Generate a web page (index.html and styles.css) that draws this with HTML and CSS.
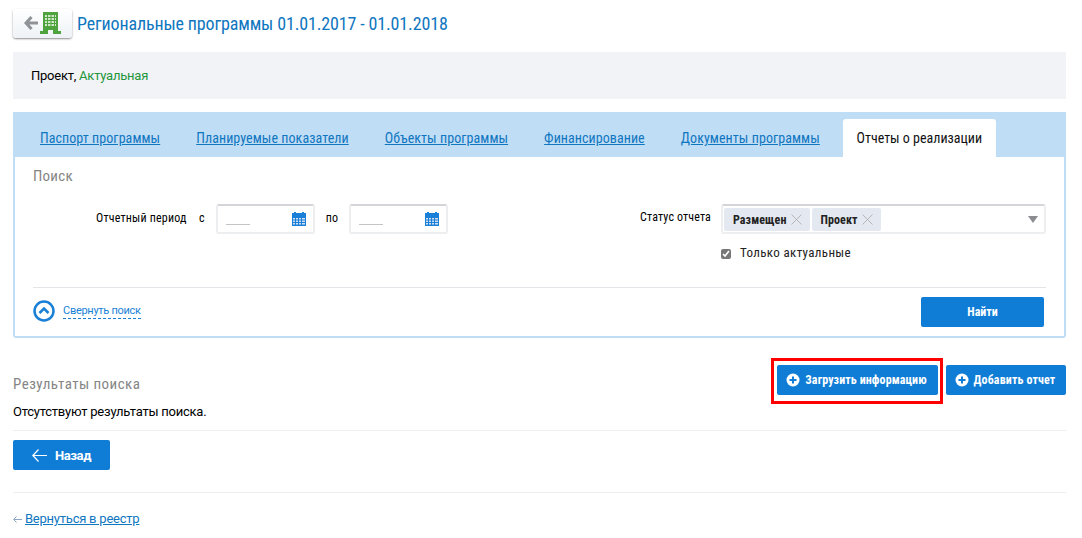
FILE: index.html
```html
<!DOCTYPE html>
<html lang="ru">
<head>
<meta charset="utf-8">
<title>Региональные программы</title>
<link rel="stylesheet" href="styles.css">
</head>
<body>
<header class="head">
  <a class="home" href="#">
    <svg class="home-arrow" width="14" height="14" viewBox="0 0 14 14"><path d="M7.500 1 2 7l5.500 6M3 7h11" fill="none" stroke="#8f9296" stroke-width="3"/></svg>
    <svg class="home-build" width="21" height="22" viewBox="0 0 21 22"><path fill="#4fa33f" d="M0 19h3V0h15v19h3v3H13v-4H8v4H0z"/><path fill="#cfe6c8" d="M5 3h2v2H5zM8 3h2.500v2H8zM11.500 3H14v2h-2.500zM15 3h1v2h-1zM5 6h2v2H5zM8 6h2.500v2H8zM11.500 6H14v2h-2.500zM15 6h1v2h-1zM5 9h2v2H5zM8 9h2.500v2H8zM11.500 9H14v2h-2.500zM15 9h1v2h-1zM5 12h2v2H5zM8 12h2.500v2H8zM11.500 12H14v2h-2.500zM15 12h1v2h-1z"/></svg>
  </a>
  <h1 class="title">Региональные программы 01.01.2017 - 01.01.2018</h1>
</header>

<div class="status">Проект, <span class="status-ok">Актуальная</span></div>

<section class="panel">
  <nav class="tabs">
    <a class="tab" href="#">Паспорт программы</a>
    <a class="tab" href="#">Планируемые показатели</a>
    <a class="tab" href="#">Объекты программы</a>
    <a class="tab" href="#">Финансирование</a>
    <a class="tab" href="#">Документы программы</a>
    <span class="tab tab-active">Отчеты о реализации</span>
  </nav>
  <div class="panel-body">
    <h2 class="search-title">Поиск</h2>
    <div class="form">
      <div class="period">
        <span class="period-label">Отчетный период</span>
        <span class="period-from">с</span>
        <div class="date">
          <span class="date-mask"></span>
          <svg width="14" height="14" viewBox="0 0 14 14"><path fill="#1a7fd6" d="M2 0h2v1h6V0h2v1h2v4H0V1h2z"/><path fill="#1a7fd6" d="M0 5h14v9H0z"/><path fill="#cfe0f5" d="M1 6h2v1.500H1zM4 6h2v1.500H4zM7 6h2v1.500H7zM10 6h3v1.500h-3zM1 8.500h2V10H1zM4 8.500h2V10H4zM7 8.500h2V10H7zM10 8.500h3V10h-3zM1 11h2v1.500H1zM4 11h2v1.500H4zM7 11h2v1.500H7zM10 11h3v1.500h-3z"/></svg>
        </div>
        <span class="period-to">по</span>
        <div class="date">
          <span class="date-mask"></span>
          <svg width="14" height="14" viewBox="0 0 14 14"><path fill="#1a7fd6" d="M2 0h2v1h6V0h2v1h2v4H0V1h2z"/><path fill="#1a7fd6" d="M0 5h14v9H0z"/><path fill="#cfe0f5" d="M1 6h2v1.500H1zM4 6h2v1.500H4zM7 6h2v1.500H7zM10 6h3v1.500h-3zM1 8.500h2V10H1zM4 8.500h2V10H4zM7 8.500h2V10H7zM10 8.500h3V10h-3zM1 11h2v1.500H1zM4 11h2v1.500H4zM7 11h2v1.500H7zM10 11h3v1.500h-3z"/></svg>
        </div>
      </div>
      <div class="state">
        <div class="state-row">
          <span class="state-label">Статус отчета</span>
          <div class="select">
            <span class="chip">Размещен<svg width="11" height="11" viewBox="0 0 11 11"><path d="M.5.5l10 10M10.500.5l-10 10" stroke="#b4b8bd" fill="none"/></svg></span>
            <span class="chip">Проект<svg width="11" height="11" viewBox="0 0 11 11"><path d="M.5.5l10 10M10.500.5l-10 10" stroke="#b4b8bd" fill="none"/></svg></span>
            <span class="caret"></span>
          </div>
        </div>
        <label class="check"><input class="check-box" type="checkbox" checked>Только актуальные</label>
      </div>
    </div>
    <div class="form-foot">
      <a class="collapse" href="#">
        <svg width="22" height="22" viewBox="0 0 22 22"><circle cx="11" cy="11" r="9.500" fill="none" stroke="#1a7fd6" stroke-width="2.500"/><path d="M6.500 13 11 8.500l4.500 4.500" fill="none" stroke="#1a7fd6" stroke-width="2.500"/></svg>
        <span class="collapse-text">Свернуть поиск</span>
      </a>
      <button class="btn btn-find" type="button">Найти</button>
    </div>
  </div>
</section>

<section class="results">
  <h2 class="results-title">Результаты поиска</h2>
  <div class="actions">
    <div class="highlight">
      <button class="btn btn-add btn-upload" type="button"><svg width="14" height="14" viewBox="0 0 14 14"><circle cx="7" cy="7" r="6.500" fill="#fff"/><path d="M7 3.500v7M3.500 7h7" stroke="#0f7dd6" stroke-width="2"/></svg><span>Загрузить информацию</span></button>
    </div>
    <button class="btn btn-add" type="button"><svg width="14" height="14" viewBox="0 0 14 14"><circle cx="7" cy="7" r="6.500" fill="#fff"/><path d="M7 3.500v7M3.500 7h7" stroke="#0f7dd6" stroke-width="2"/></svg><span>Добавить отчет</span></button>
  </div>
</section>
<p class="empty">Отсутствуют результаты поиска.</p>
<div class="back-row">
  <button class="btn btn-back" type="button"><svg width="15" height="13" viewBox="0 0 15 13"><path d="M6.500.5.800 6.500l5.700 6M1 6.500h14" fill="none" stroke="#fff" stroke-width="1.200"/></svg><span>Назад</span></button>
</div>
<footer class="foot"><svg class="foot-arrow" width="9" height="7" viewBox="0 0 9 7"><path d="M3.500.5.700 3.500l2.800 3M1 3.500h8" fill="none" stroke="#8ba6c4"/></svg><a class="foot-link" href="#">Вернуться в реестр</a></footer>
</body>
</html>
```
FILE: styles.css
```css
* { box-sizing: border-box; }
body {
  margin: 0;
  padding: 9px 16px 0 13px;
  font-family: Roboto, "Liberation Sans", sans-serif;
  font-size: 13px;
  letter-spacing: -.23px;
  color: #000;
  background: #fff;
}
a { color: #0f76c0; }
button { font-stretch: 87.500%; white-space: nowrap; }
svg { flex: none; }
h1, h2, p { margin: 0; font-weight: 400; }
.head { display: flex; align-items: center; gap: 5px; height: 29px; }
.home {
  width: 59px; height: 29px;
  display: flex; align-items: center; gap: 3px;
  padding: 0 0 1px 11px;
  border-radius: 3px;
  background: linear-gradient(#fff, #eef2f6);
  box-shadow: 0 1px 2px rgba(0,0,0,.45);
}
.home-arrow { margin-right: -1px; }
.title { font-size: 18px; line-height: 30px; color: #0f76c0; font-stretch: 87.500%; letter-spacing: -.15px; padding-top: 1px; }
.status {
  margin-top: 14px; height: 47px; padding-left: 18px;
  display: flex; align-items: center; gap: 3px;
  background: #f1f3f6;
}
.status-ok { color: #23963c; }
.panel { margin-top: 13px; height: 226px; display: flex; flex-direction: column; border-radius: 2px; }
.tabs {
  height: 45px; background: #c0ddf6;
  display: flex; align-items: flex-end; padding-left: 27px; gap: 36px;
  flex: none;
}
.tab { font-size: 14px; line-height: 38px; height: 38px; white-space: nowrap; font-stretch: 87.500%; letter-spacing: .07px; }
.tab-active { background: #fff; width: 153px; margin-left: -13px; text-align: center; border-radius: 3px 3px 0 0; color: #111; letter-spacing: 0; }
.panel-body {
  flex: 1; padding: 0 18px 0 18px;
  border: solid #c0ddf6; border-width: 0 2px 2px;
  border-radius: 0 0 3px 3px;
  display: flex; flex-direction: column;
}
.search-title { font-size: 15px; line-height: 18px; margin-top: 10px; color: #858585; font-stretch: 87.500%; letter-spacing: .25px; }
.form { display: flex; height: 103px; padding-top: 19px; border-bottom: 1px solid #e3e5e8; }
.period { display: flex; align-items: flex-start; width: 587px; padding-left: 63px; font-size: 12px; font-stretch: 87.500%; letter-spacing: .2px; }
.period-label { line-height: 28px; width: 103px; }
.period-from { line-height: 28px; width: 17px; }
.period-to { line-height: 28px; width: 34px; text-align: center; }
.date {
  width: 99px; height: 30px; padding: 6px 7px 0 8px;
  display: flex; justify-content: space-between; align-items: flex-start;
  border: 2px solid #eceef0; border-top-color: #d3d5d8; border-radius: 3px;
}
.date-mask { width: 24px; height: 1px; margin-top: 12px; background: #c4c4c4; }
.state { flex: 1; font-size: 12px; font-stretch: 87.500%; letter-spacing: .15px; }
.state-row { display: flex; align-items: flex-start; }
.state-label { line-height: 27px; white-space: nowrap; text-align: right; padding-right: 10px; width: 101px; flex: none; }
.select {
  flex: 1; height: 30px; padding: 2px 1px;
  position: relative; display: flex; gap: 2px;
  border: 2px solid #eceef0; border-top-color: #d3d5d8; border-radius: 3px;
}
.chip {
  height: 23px; padding: 0 8px 0 9px;
  display: flex; align-items: center; gap: 4px;
  background: #e4e9f1; border-radius: 2px;
  font-size: 12px; font-weight: 700; color: #222; letter-spacing: .1px;
}
.caret {
  position: absolute; right: 6px; top: 10px;
  border: solid transparent; border-width: 7px 5.500px 0; border-top-color: #8b8d90;
}
.check { display: flex; align-items: center; margin: 10px 0 0 101px; font-size: 13px; color: #222; line-height: 18px; letter-spacing: .35px; }
.check-box { width: 10px; height: 10px; margin: 1px 9px 0 0; accent-color: #777; }
.form-foot { display: flex; align-items: flex-start; justify-content: space-between; padding-top: 9px; }
.collapse { display: flex; align-items: center; gap: 8px; text-decoration: none; padding-top: 3px; color: #1a7fd6; }
.collapse-text { font-size: 11px; line-height: 14px; border-bottom: 1px dashed #1a7fd6; letter-spacing: -.28px; }
.btn {
  border: 0; border-radius: 2px; background: #0f7dd6; color: #fff;
  font-family: inherit; font-size: 12px; font-weight: 700; letter-spacing: 0;
  display: flex; align-items: center; justify-content: center;
}
.btn-find { width: 123px; height: 30px; margin-right: 2px; }
.results { display: flex; justify-content: space-between; margin-top: 20px; }
.results-title { font-size: 15px; line-height: 18px; margin-top: 17px; color: #858585; font-stretch: 87.500%; letter-spacing: .45px; }
.actions { display: flex; align-items: flex-start; gap: 3px; }
.highlight { border: 3px solid #f00; padding: 4px 2px 5px 3px; width: 172px; height: 46px; }
.btn-add { width: 120px; height: 30px; gap: 5px; margin-top: 7px; padding: 0 2px 0 0; letter-spacing: .14px; }
.btn-upload { width: 161px; margin-top: 0; padding: 0 2px 0 0; letter-spacing: .1px; }
.empty { margin-top: -2px; line-height: 20px; }
.back-row { margin-top: 8px; padding-top: 9px; border-top: 1px solid #eceef0; height: 63px; border-bottom: 1px solid #eceef0; }
.btn-back { width: 97px; height: 30px; gap: 8px; padding: 1px 0 0; font-size: 13px; font-stretch: 100%; letter-spacing: -.4px; }
.foot { margin-top: 18px; font-size: 13px; display: flex; align-items: center; gap: 3px; line-height: 16px; }
.foot-link { color: #0f76c0; }
```
